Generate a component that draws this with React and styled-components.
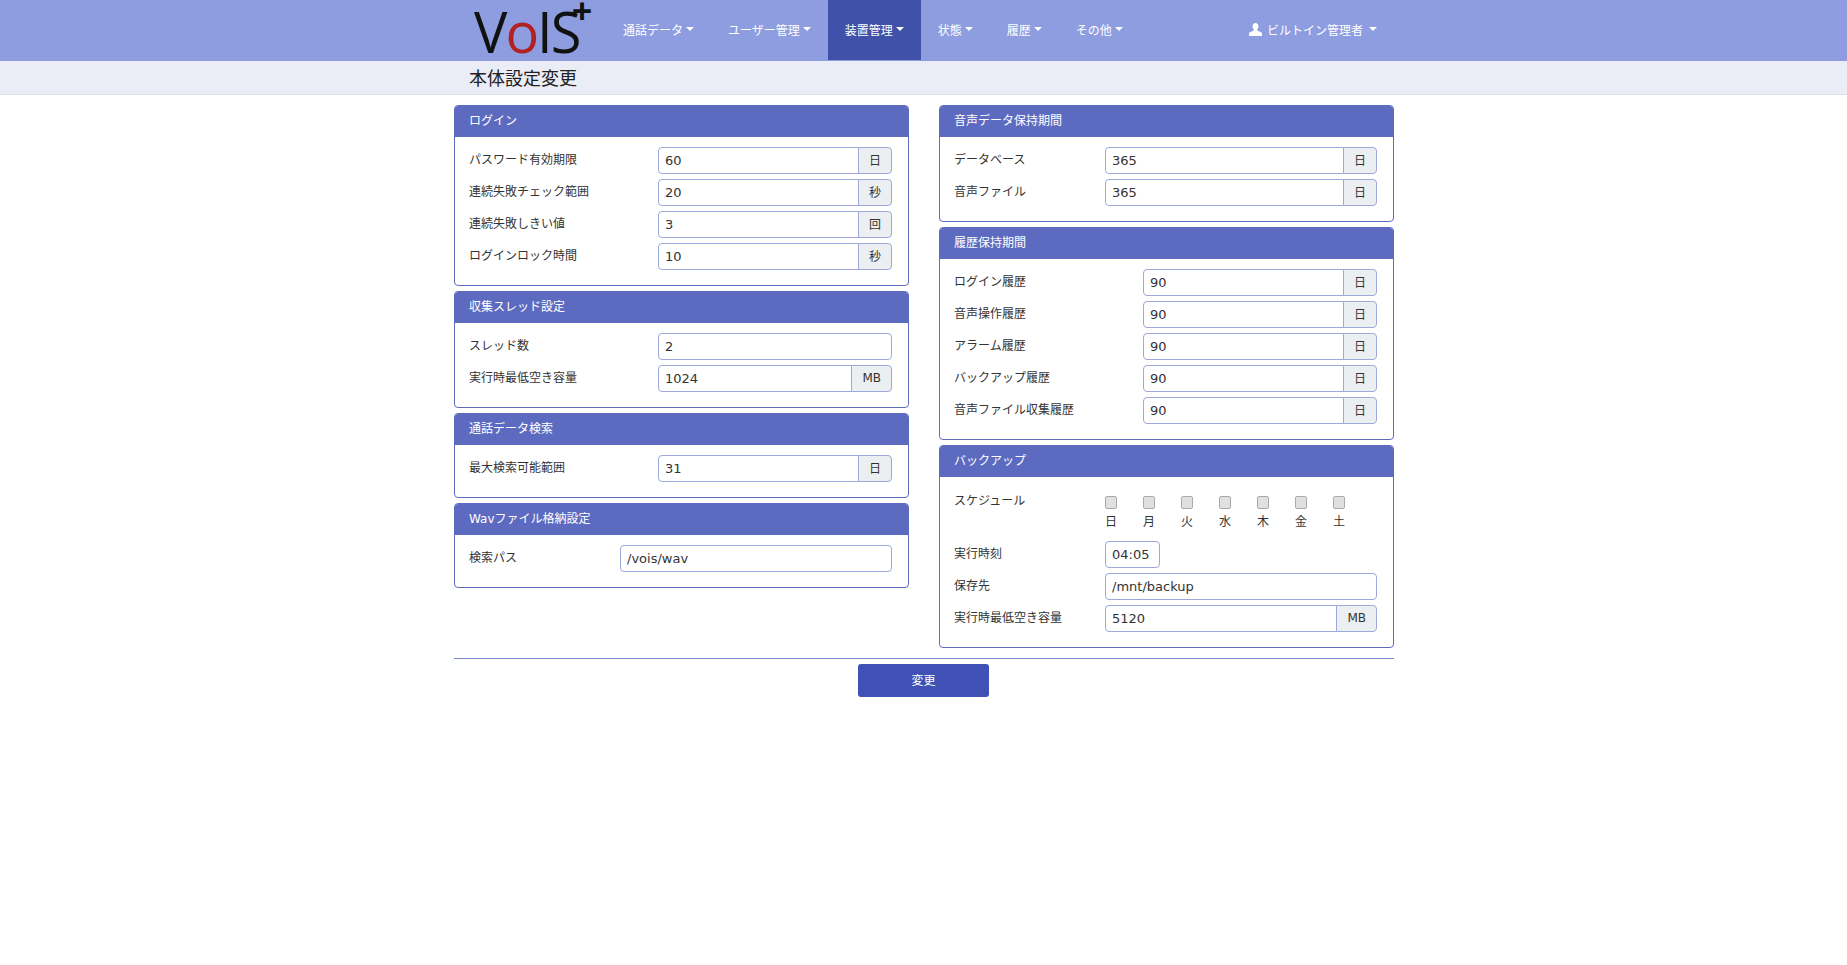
import React from 'react'
import styled, { createGlobalStyle } from 'styled-components'

const GlobalStyle = createGlobalStyle`
  html, body {
    margin: 0;
    padding: 0;
    background: #fff;
    font-family: "DejaVu Sans", "Noto Sans CJK JP", sans-serif;
    font-size: 12px;
    color: #333;
  }
  * { box-sizing: border-box; }
`

const NavBar = styled.nav`
  height: 61px;
  background: #8d9de0;
`
const NavInner = styled.div`
  width: 940px;
  margin-left: calc(50% - 469.5px);
  height: 60px;
  display: flex;
`
const Brand = styled.a`
  width: 152px;
  padding-left: 20px;
  display: flex;
  align-items: center;
`
const Logo = styled.span`
  position: relative;
  font-family: "Open Sans", sans-serif;
  font-size: 56px;
  line-height: 60px;
  letter-spacing: -2px;
  color: #111;
  margin-top: 2px;
  em {
    font-style: normal;
    color: #b22222;
  }
  sup {
    position: absolute;
    right: -13px;
    top: -10px;
    font-size: 36px;
    font-weight: 700;
    line-height: 40px;
    letter-spacing: 0;
  }
`
const NavItem = styled.a`
  display: flex;
  align-items: center;
  padding: 0 17px 2px;
  color: #fff;
  background: ${p => (p.$active ? '#3f51a8' : 'transparent')};
  margin-left: ${p => (p.$right ? 'auto' : '0')};
  white-space: nowrap;
`
const Caret = styled.i`
  width: 0;
  height: 0;
  margin-left: ${p => p.$gap || 3}px;
  border-left: 4px solid transparent;
  border-right: 4px solid transparent;
  border-top: 4px solid #fff;
`
const UserIcon = styled.svg`
  width: 13px;
  height: 13px;
  margin-right: 5px;
  fill: #fff;
`
const SubBar = styled.div`
  height: 34px;
  background: #eaedf6;
  border-bottom: 1px solid #dfe1e8;
`
const SubInner = styled.div`
  width: 940px;
  margin-left: calc(50% - 469.5px);
  padding-left: 15px;
`
const Title = styled.h1`
  margin: 0;
  font-size: 18px;
  font-weight: 400;
  line-height: 35px;
  color: #222;
`
const Main = styled.main`
  width: 940px;
  margin: 10px 0 0 calc(50% - 469.5px);
`
const Columns = styled.div`
  display: grid;
  grid-template-columns: 455px 455px;
  column-gap: 30px;
  align-items: start;
`
const Column = styled.div`
  display: flex;
  flex-direction: column;
  gap: 5px;
`
const Panel = styled.section`
  border: 1px solid #5c6bc0;
  border-radius: 4px;
  overflow: hidden;
`
const PanelHead = styled.h2`
  margin: 0;
  height: 31px;
  padding-left: 14px;
  background: #5c6bc0;
  color: #fff;
  font-size: 12px;
  font-weight: 400;
  line-height: 30px;
`
const PanelBody = styled.div`
  padding: 10px 16px 15px 14px;
  display: flex;
  flex-direction: column;
  gap: 5px;
`
const Row = styled.div`
  display: grid;
  grid-template-columns: ${p => p.$label}px 1fr;
  align-items: center;
  min-height: 27px;
`
const Label = styled.label`
  color: #333;
  line-height: 20px;
  margin-top: -2px;
`
const Group = styled.div`
  display: flex;
  height: 27px;
`
const Input = styled.input`
  flex: 1;
  min-width: 0;
  width: ${p => (p.$w ? `${p.$w}px` : '100%')};
  height: 27px;
  padding: 0 6px;
  border: 1px solid #9fa8da;
  border-radius: ${p => (p.$joined ? '4px 0 0 4px' : '4px')};
  font: inherit;
  font-size: 13px;
  color: #333;
  outline: none;
  background: #fff;
`
const Addon = styled.span`
  display: flex;
  align-items: center;
  padding: 0 10px 2px;
  height: 27px;
  margin-left: -1px;
  border: 1px solid #9fa8da;
  border-radius: 0 4px 4px 0;
  background: #eceff1;
  color: #333;
`
const Days = styled.div`
  display: flex;
`
const Day = styled.label`
  width: 38px;
  display: flex;
  flex-direction: column;
  align-items: flex-start;
  gap: 4px;
  line-height: 18px;
  color: #333;
`
const Check = styled.input.attrs({ type: 'checkbox' })`
  appearance: none;
  width: 12px;
  height: 13px;
  margin: 0;
  border: 1px solid #aaa;
  border-radius: 2px;
  background: #e0e0e0;
`
const ScheduleRow = styled.div`
  display: grid;
  grid-template-columns: ${p => p.$label}px 1fr;
  padding-top: 9px;
  height: 49px;
`
const ScheduleLabel = styled.span`
  line-height: 20px;
  margin-top: -5px;
`
const Rule = styled.hr`
  margin: 10px 0 5px;
  border: 0;
  border-top: 1px solid #7986cb;
`
const Actions = styled.div`
  display: flex;
  justify-content: center;
`
const Submit = styled.button`
  width: 131px;
  height: 33px;
  margin-right: 1px;
  padding: 0 0 2px;
  border: 0;
  border-radius: 3px;
  background: #3f51b5;
  color: #fff;
  font: inherit;
`

const Field = ({ label, value, unit, w = 189 }) => (
  <Row $label={w}>
    <Label>{label}</Label>
    <Group>
      <Input readOnly value={value} $joined={!!unit} />
      {unit && <Addon>{unit}</Addon>}
    </Group>
  </Row>
)

const Card = ({ title, children }) => (
  <Panel>
    <PanelHead>{title}</PanelHead>
    <PanelBody>{children}</PanelBody>
  </Panel>
)

const menu = [
  { text: '通話データ' },
  { text: 'ユーザー管理' },
  { text: '装置管理', active: true },
  { text: '状態' },
  { text: '履歴' },
  { text: 'その他' },
]

const login = [
  ['パスワード有効期限', '60', '日'],
  ['連続失敗チェック範囲', '20', '秒'],
  ['連続失敗しきい値', '3', '回'],
  ['ログインロック時間', '10', '秒'],
]

const history = [
  ['ログイン履歴', '90'],
  ['音声操作履歴', '90'],
  ['アラーム履歴', '90'],
  ['バックアップ履歴', '90'],
  ['音声ファイル収集履歴', '90'],
]

const days = ['日', '月', '火', '水', '木', '金', '土']

export default function App() {
  return (
    <>
      <GlobalStyle />
      <NavBar>
        <NavInner>
          <Brand>
            <Logo>V<em>o</em>IS<sup>+</sup></Logo>
          </Brand>
          {menu.map(m => (
            <NavItem key={m.text} $active={m.active}>
              {m.text}<Caret />
            </NavItem>
          ))}
          <NavItem $right>
            <UserIcon viewBox="0 0 13 13">
              <path d="M6.5 0C4.7 0 3.6 1.4 3.6 3.3c0 1.3.5 2.4 1.2 3.1v1.1L1 9.2C.3 9.5 0 10 0 10.7V13h13v-2.3c0-.7-.3-1.2-1-1.5L8.200 7.500V6.400c.7-.7 1.200-1.800 1.200-3.100C9.400 1.400 8.300 0 6.500 0z" />
            </UserIcon>
            ビルトイン管理者<Caret $gap={6} />
          </NavItem>
        </NavInner>
      </NavBar>
      <SubBar>
        <SubInner>
          <Title>本体設定変更</Title>
        </SubInner>
      </SubBar>
      <Main>
        <Columns>
          <Column>
            <Card title="ログイン">
              {login.map(([l, v, u]) => <Field key={l} label={l} value={v} unit={u} />)}
            </Card>
            <Card title="収集スレッド設定">
              <Field label="スレッド数" value="2" />
              <Field label="実行時最低空き容量" value="1024" unit="MB" />
            </Card>
            <Card title="通話データ検索">
              <Field label="最大検索可能範囲" value="31" unit="日" />
            </Card>
            <Card title="Wavファイル格納設定">
              <Field label="検索パス" value="/vois/wav" w={151} />
            </Card>
          </Column>
          <Column>
            <Card title="音声データ保持期間">
              <Field label="データベース" value="365" unit="日" w={151} />
              <Field label="音声ファイル" value="365" unit="日" w={151} />
            </Card>
            <Card title="履歴保持期間">
              {history.map(([l, v]) => <Field key={l} label={l} value={v} unit="日" />)}
            </Card>
            <Card title="バックアップ">
              <ScheduleRow $label={151}>
                <ScheduleLabel>スケジュール</ScheduleLabel>
                <Days>
                  {days.map(d => (
                    <Day key={d}><Check />{d}</Day>
                  ))}
                </Days>
              </ScheduleRow>
              <Row $label={151}>
                <Label>実行時刻</Label>
                <Input readOnly value="04:05" $w={55} />
              </Row>
              <Field label="保存先" value="/mnt/backup" w={151} />
              <Field label="実行時最低空き容量" value="5120" unit="MB" w={151} />
            </Card>
          </Column>
        </Columns>
        <Rule />
        <Actions>
          <Submit>変更</Submit>
        </Actions>
      </Main>
    </>
  )
}
